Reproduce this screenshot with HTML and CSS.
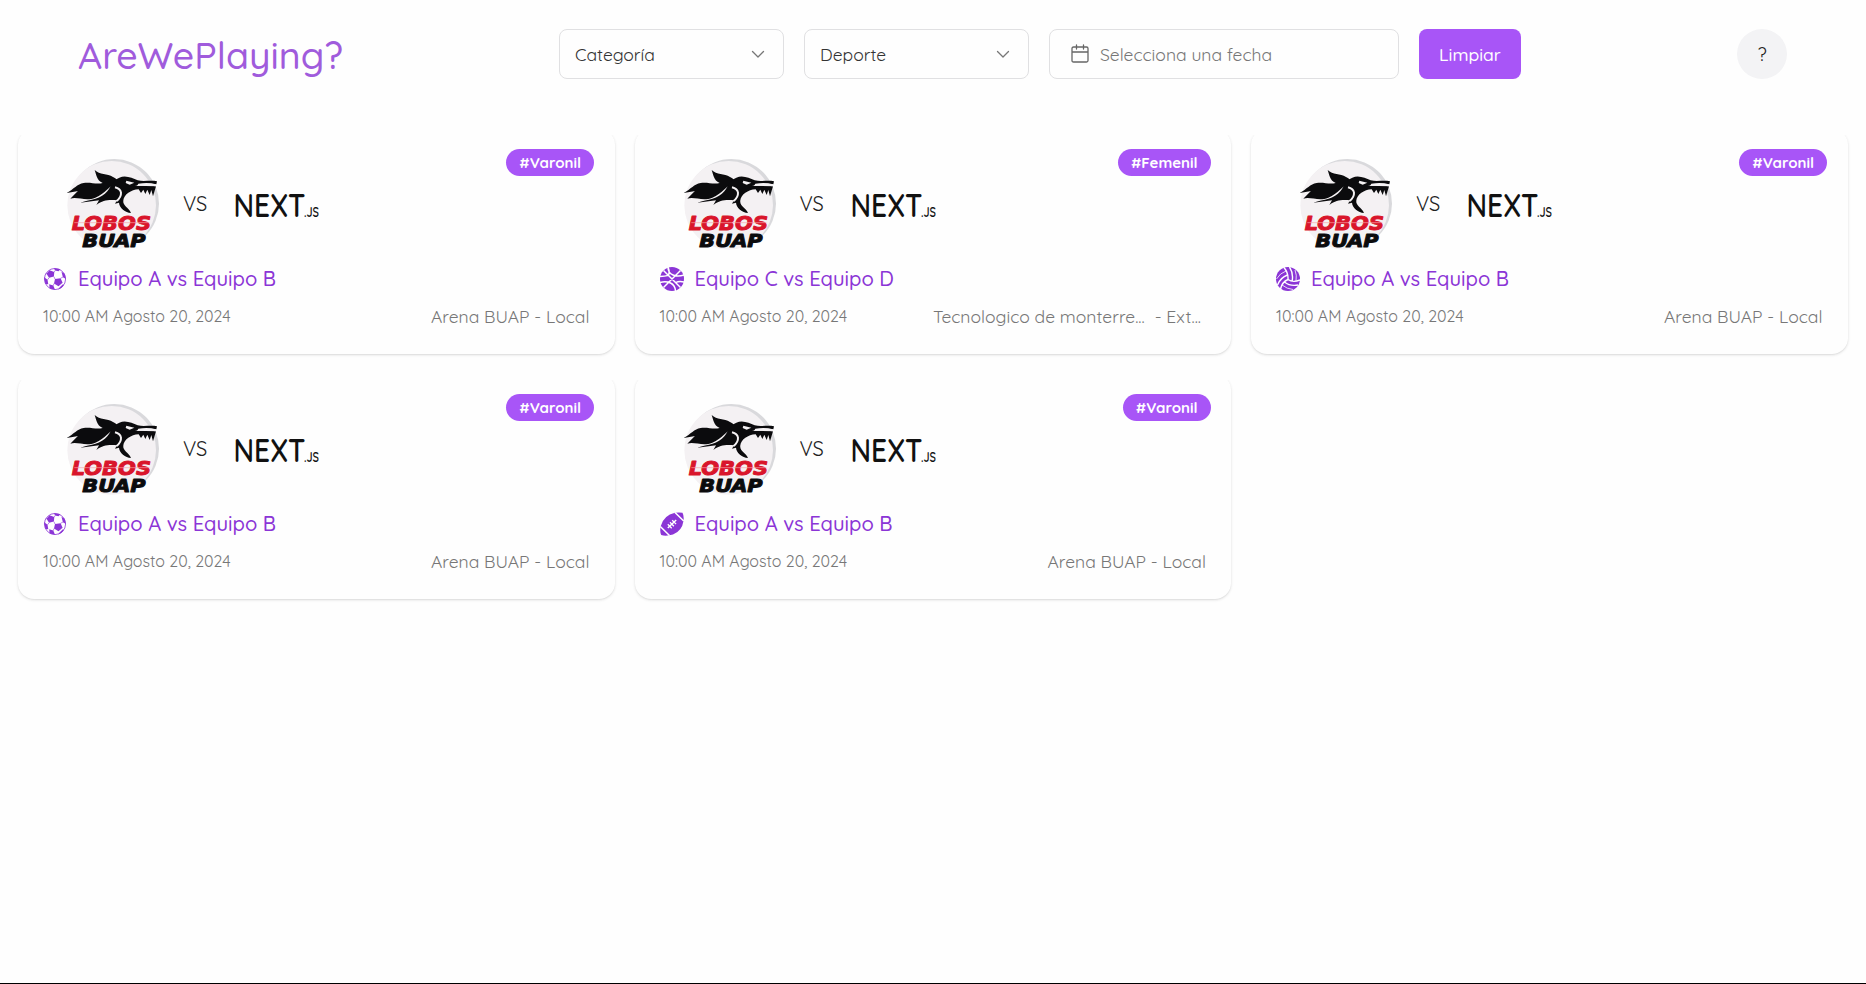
FILE: index.html
```
<!DOCTYPE html>
<html lang="es">
<head>
<meta charset="utf-8">
<title>AreWePlaying?</title>
<link rel="stylesheet" href="styles.css">
</head>
<body>
<svg class="sprite" aria-hidden="true">
  <symbol id="lobos" viewBox="0 0 360 330">
    <circle cx="178" cy="161" r="134" fill="#d9d9dc"/>
    <circle cx="170" cy="166" r="133" fill="#f4f1f3"/>
    <path fill="#0b0b0d" d="M119 60C134 75 157 70 174 81C186 86 192 95 191 101C161 103 151 132 121 143C93 155 67 139 46 146C58 135 65 125 70 123L35 129C57 117 66 102 86 99C107 96 124 104 143 99C124 91 124 73 119 60Z"/>
    <path fill="#0b0b0d" d="M76 158C108 149 139 147 157 124C169 110 171 92 193 83C213 74 232 85 248 91C265 96 286 90 306 94L304 103C284 98 263 103 240 107L303 109L294 139L289 120L284 135L277 119L271 132L265 119L258 129L251 118C228 119 207 134 205 151C202 168 222 173 228 189C211 187 193 174 192 158L180 161L186 151C157 149 145 151 124 165L132 151Z"/>
    <path fill="#f4f1f3" d="M214 92L238 98L224 104L212 99ZM250 101Q280 96 303 103L303 109Q270 104 246 108Z"/>
    <path fill="none" stroke="#f4f1f3" stroke-width="6" d="M180 112Q196 116 198 128Q199 142 184 154"/>
    <g font-family="'DejaVu Sans', sans-serif" font-weight="700" font-style="italic" stroke-linejoin="round">
      <text x="50" y="239" font-size="58" textLength="238" lengthAdjust="spacingAndGlyphs" fill="#d9152b" stroke="#d9152b" stroke-width="3">LOBOS</text>
      <text x="82" y="290" font-size="55" textLength="190" lengthAdjust="spacingAndGlyphs" fill="#0b0b0d" stroke="#0b0b0d" stroke-width="3">BUAP</text>
    </g>
    <path stroke="#f6a5a8" stroke-width="2" d="M58 218H283"/>
  </symbol>
  <symbol id="next" viewBox="0 0 84 26">
    <g font-family="Quicksand, Inter, sans-serif" fill="#111">
      <text x="-1.500" y="24.500" font-size="33" font-weight="600" textLength="72" lengthAdjust="spacingAndGlyphs">NEXT</text>
      <text x="69" y="24.500" font-size="14" font-weight="600" textLength="15" lengthAdjust="spacingAndGlyphs">.JS</text>
    </g>
  </symbol>
  <symbol id="soccer" viewBox="0 0 24 24">
    <circle cx="12" cy="12" r="10.600" fill="#fff" stroke="currentColor" stroke-width=".8"/>
    <g fill="currentColor">
      <path d="M6.500 3.300L11.300 5L10.900 9.600L6 10.800L3.500 6.800Z"/>
      <path d="M12 12L17.600 11.200L19.600 15.800L15.500 19.300L11 16.500Z"/>
      <path d="M11 1.200L17.500 2.200L15.500 4.300L12 3.600Z"/>
      <path d="M18.500 4.800L21.500 6.600L23 12L19.900 10.200Z"/>
      <path d="M1 10L4.500 12.800L5.300 17.300L2.400 17Z"/>
      <path d="M6.200 17.300L10.300 18.600L12 22.700L6.600 21.600Z"/>
      <path d="M16.300 20.800L20.200 17L20.600 18.800Q18.500 21.600 15.300 22.500Z"/>
    </g>
    <path fill="none" stroke="currentColor" stroke-width=".6" d="M11.300 5L12 3.600M10.900 9.600L12 12M6 10.800L4.500 12.800M3.500 6.800L2.300 7M17.600 11.200L19.900 10.200M11 16.500L10.300 18.600"/>
  </symbol>
  <symbol id="basket" viewBox="0 0 24 24">
    <circle cx="12" cy="12" r="12" fill="currentColor"/>
    <path fill="none" stroke="#fff" stroke-width="1.500" d="M3.500 3.500L20.500 20.500M20.500 3.500L3.500 20.500M8 0Q8 6 13 8Q18 10 24 8M0 15.500Q6 14 10.500 16Q15 18 15.500 24M0 9.500Q5 9.500 8.400 8.400Q10 5 8 0M15.600 15.600Q19 14 24 15"/>
  </symbol>
  <symbol id="volley" viewBox="0 0 24 24">
    <circle cx="12" cy="12" r="12" fill="currentColor"/>
    <path fill="none" stroke="#fff" stroke-width="1.400" d="M12 12.500Q12.500 6 8 .5M12 12.500Q17 16 24 13M12 12.500Q6 15 4.500 22M16.200 13.800Q17.500 6 13.500 0M8.500 15Q14 19.500 22 18M11.500 8Q4.500 10.500 1.500 18"/>
    <path fill="none" stroke="#fff" stroke-width=".8" d="M20 14Q21 8 19 3M6 18Q11 22 17 22.500M10 4Q4 6 .5 12"/>
  </symbol>
  <symbol id="football" viewBox="0 0 24 24">
    <path fill="currentColor" d="M15 .8Q19 0 22.500 .8Q24.200 4 23.500 9Q22 19 13 22.500Q6 24.500 1.200 23Q-.5 19 .8 14Q3.500 3.500 15 .8Z"/>
    <path fill="none" stroke="#fff" stroke-width="1.500" d="M15 .5L23.700 9M.3 14.500L9.500 23.500M7.800 16L16.200 8"/>
    <path stroke="#fff" stroke-width="1.300" d="M7.800 12.300L11.700 16.200M10 10.300L13.900 14.200M12.200 8.200L16.100 12.100"/>
  </symbol>
  <symbol id="chevron" viewBox="0 0 14 14">
    <path fill="none" stroke="#777" stroke-width="1.300" stroke-linecap="round" stroke-linejoin="round" d="M1.500 4.500L7 10L12.500 4.500"/>
  </symbol>
</svg>

<header class="header">
  <h1 class="brand">AreWePlaying?</h1>
  <div class="filters">
    <div class="field select"><span>Categoría</span><svg class="chevron"><use href="#chevron"/></svg></div>
    <div class="field select"><span>Deporte</span><svg class="chevron"><use href="#chevron"/></svg></div>
    <div class="field date">
      <svg class="calendar" viewBox="0 0 18 20"><path fill="none" stroke="#666" stroke-width="1.300" stroke-linecap="round" d="M2.500 3H15.500Q17 3 17 4.500V16.500Q17 18 15.500 18H2.500Q1 18 1 16.500V4.500Q1 3 2.500 3ZM1 8H17M5.500 1V5M12.500 1V5"/></svg>
      <span>Selecciona una fecha</span>
    </div>
    <button class="clear">Limpiar</button>
  </div>
  <button class="help">?</button>
</header>

<main class="grid">
  <article class="card">
    <span class="tag">#Varonil</span>
    <div class="teams"><svg class="lobos"><use href="#lobos"/></svg><span class="vs">VS</span><svg class="next"><use href="#next"/></svg></div>
    <h2 class="title"><svg class="sport"><use href="#soccer"/></svg><span>Equipo A vs Equipo B</span></h2>
    <div class="meta"><span class="when">10:00 AM Agosto 20, 2024</span><span class="where">Arena BUAP - Local</span></div>
  </article>
  <article class="card">
    <span class="tag">#Femenil</span>
    <div class="teams"><svg class="lobos"><use href="#lobos"/></svg><span class="vs">VS</span><svg class="next"><use href="#next"/></svg></div>
    <h2 class="title"><svg class="sport"><use href="#basket"/></svg><span>Equipo C vs Equipo D</span></h2>
    <div class="meta"><span class="when">10:00 AM Agosto 20, 2024</span><span class="where long"><span>Tecnologico de monterre...</span><span>- Ext...</span></span></div>
  </article>
  <article class="card">
    <span class="tag">#Varonil</span>
    <div class="teams"><svg class="lobos"><use href="#lobos"/></svg><span class="vs">VS</span><svg class="next"><use href="#next"/></svg></div>
    <h2 class="title"><svg class="sport"><use href="#volley"/></svg><span>Equipo A vs Equipo B</span></h2>
    <div class="meta"><span class="when">10:00 AM Agosto 20, 2024</span><span class="where">Arena BUAP - Local</span></div>
  </article>
  <article class="card">
    <span class="tag">#Varonil</span>
    <div class="teams"><svg class="lobos"><use href="#lobos"/></svg><span class="vs">VS</span><svg class="next"><use href="#next"/></svg></div>
    <h2 class="title"><svg class="sport"><use href="#soccer"/></svg><span>Equipo A vs Equipo B</span></h2>
    <div class="meta"><span class="when">10:00 AM Agosto 20, 2024</span><span class="where">Arena BUAP - Local</span></div>
  </article>
  <article class="card">
    <span class="tag">#Varonil</span>
    <div class="teams"><svg class="lobos"><use href="#lobos"/></svg><span class="vs">VS</span><svg class="next"><use href="#next"/></svg></div>
    <h2 class="title"><svg class="sport"><use href="#football"/></svg><span>Equipo A vs Equipo B</span></h2>
    <div class="meta"><span class="when">10:00 AM Agosto 20, 2024</span><span class="where">Arena BUAP - Local</span></div>
  </article>
</main>
</body>
</html>
```
FILE: styles.css
```
* { box-sizing: border-box; }
body {
  margin: 0;
  height: 984px;
  overflow: hidden;
  background: #fefefe;
  border-bottom: 1px solid #000;
  font-family: Quicksand, Lato, sans-serif;
  color: #222;
}
.sprite { display: none; }
button { border: 0; font-family: inherit; padding: 0; }

.header {
  height: 129px;
  padding: 29px 79px 50px 78px;
  display: flex;
  justify-content: space-between;
  align-items: center;
}
.brand {
  margin: 0;
  width: 265px;
  padding-top: 2px;
  font-size: 37.5px;
  font-weight: 500;
  line-height: 50px;
  white-space: nowrap;
  color: #a05bdc;
}
.filters { display: flex; gap: 20px; }
.field {
  height: 50px;
  border: 1px solid #e0e0e2;
  border-radius: 8px;
  display: flex;
  align-items: center;
  font-size: 17.5px;
  white-space: nowrap;
}
.select { width: 225px; justify-content: space-between; padding: 0 18px 0 15px; color: #333; }
.chevron { width: 14px; height: 14px; }
.date { width: 350px; padding-left: 21px; gap: 11px; color: #777; }
.calendar { width: 18px; height: 20px; }
.clear {
  width: 102px;
  height: 50px;
  border-radius: 8px;
  background: #a855f7;
  color: #fff;
  font-size: 17.5px;
  font-weight: 500;
}
.help { width: 50px; height: 50px; border-radius: 50%; background: #f3f3f5; color: #222; font-size: 19px; }

.grid {
  padding: 0 18.5px 0 18px;
  display: grid;
  grid-template-columns: repeat(3, 1fr);
  gap: 20px;
}
.card {
  position: relative;
  height: 225px;
  padding: 21px 25px 0;
  border-radius: 16px;
  background: #fefefe;
  box-shadow: 0 1px 3px rgba(0, 0, 0, .12), 0 1px 2px -1px rgba(0, 0, 0, .12);
  clip-path: inset(6px -5px -6px -5px);
}
.tag {
  position: absolute;
  top: 20px;
  right: 20.4px;
  height: 27px;
  padding: 0 13px;
  border-radius: 14px;
  background: #a855f7;
  color: #fff;
  font-size: 15px;
  font-weight: 700;
  line-height: 27px;
}
.teams { display: flex; align-items: center; height: 110px; padding-left: 12px; }
.lobos { width: 120px; height: 110px; }
.vs { width: 51px; padding: 0 0 3px 8px; font-size: 20px; color: #222; }
.next { width: 84px; height: 26px; margin-left: 9px; }
.title {
  margin: 1px 0 0;
  height: 36px;
  display: flex;
  align-items: center;
  gap: 11px;
  font-size: 20.2px;
  font-weight: 500;
  line-height: 24px;
  white-space: nowrap;
  color: #8b35d6;
}
.sport { width: 24px; height: 24px; }
.meta {
  margin-top: 7px;
  height: 24px;
  display: flex;
  justify-content: space-between;
  align-items: center;
  white-space: nowrap;
  color: #777;
}
.when { font-size: 16px; }
.where { font-size: 17.5px; }
.long { display: flex; gap: 10px; padding-right: 5px; }
```
